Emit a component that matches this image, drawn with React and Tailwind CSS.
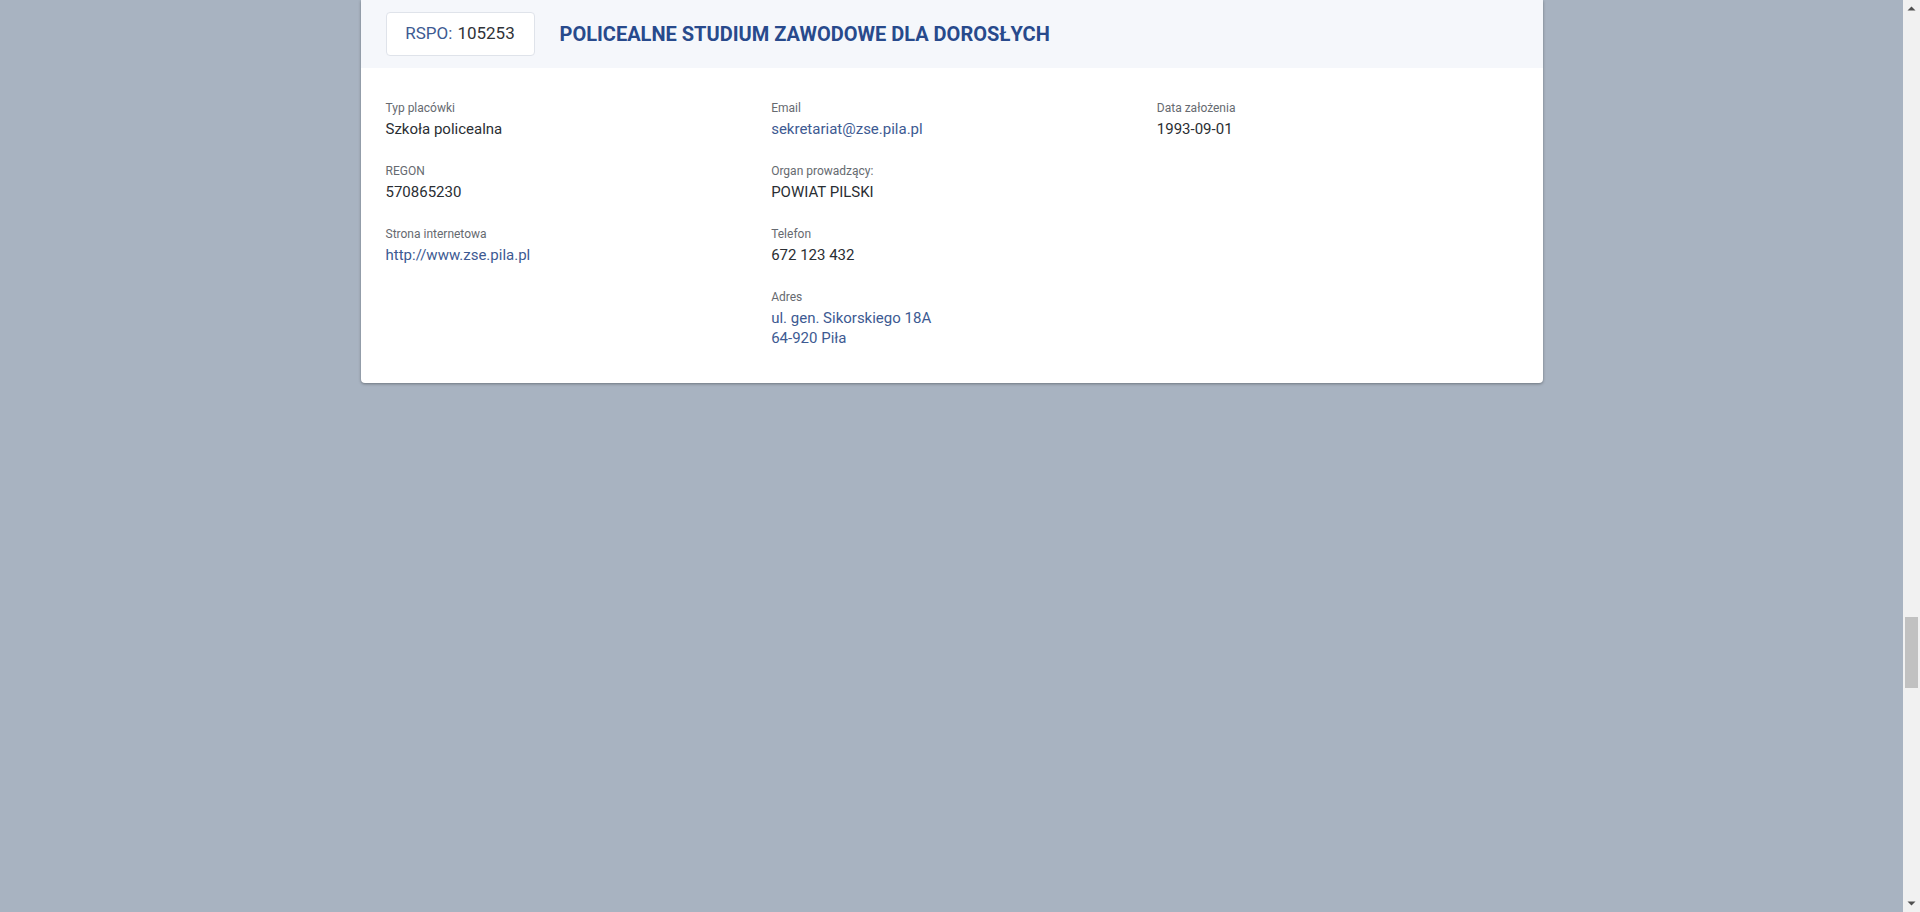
export default function App() {
  const cols = [
    [
      { l: "Typ placówki", v: ["Szkoła policealna"] },
      { l: "REGON", v: ["570865230"] },
      { l: "Strona internetowa", v: ["http://www.zse.pila.pl"], link: true },
    ],
    [
      { l: "Email", v: ["sekretariat@zse.pila.pl"], link: true },
      { l: "Organ prowadzący:", v: ["POWIAT PILSKI"] },
      { l: "Telefon", v: ["672 123 432"] },
      { l: "Adres", v: ["ul. gen. Sikorskiego 18A", "64-920 Piła"], link: true },
    ],
    [{ l: "Data założenia", v: ["1993-09-01"] }],
  ];
  return (
    <div className="flex h-[912px] w-full bg-[#a8b3c1] font-['Roboto',sans-serif] overflow-hidden">
      <div className="flex-1 flex justify-center items-start">
        <div className="w-[1182px] bg-white rounded-b-[4px] shadow-[0_1px_3px_rgba(0,0,0,0.35)]">
          <div className="h-[68px] bg-[#f5f7fb] flex items-center pl-[25px]">
            <div className="h-[44px] w-[149px] border border-[#dfe3ea] rounded-[4px] bg-white flex items-center justify-center text-[17px]">
              <span className="text-[#3d5a92]">RSPO:</span>
              <span className="text-[#2f3338] ml-[5px]">105253</span>
            </div>
            <div className="ml-[25px] text-[20px] font-bold text-[#284a8c]">
              POLICEALNE STUDIUM ZAWODOWE DLA DOROSŁYCH
            </div>
          </div>
          <div className="grid grid-cols-3 pl-[25px] pt-[32px] pb-[35px]">
            {cols.map((c, i) => (
              <div key={i} className="flex flex-col gap-y-[24px]">
                {c.map((it) => (
                  <div key={it.l} className="flex flex-col">
                    <div className="text-[12px] leading-[16px] text-[#666a70]">{it.l}</div>
                    <div
                      className={
                        "mt-[3px] text-[15px] leading-[20px] " +
                        (it.link ? "text-[#3d5a92]" : "text-[#2a2e33]")
                      }
                    >
                      {it.v.map((x) => (
                        <div key={x}>{x}</div>
                      ))}
                    </div>
                  </div>
                ))}
              </div>
            ))}
          </div>
        </div>
      </div>
      <div className="w-[17px] bg-[#f1f1f1] flex flex-col items-center">
        <div className="h-[17px] flex items-center justify-center">
          <svg width="9" height="5" viewBox="0 0 9 5">
            <path d="M0.5 4.5 L4.5 0.5 L8.5 4.5 Z" fill="#505050" />
          </svg>
        </div>
        <div className="flex-1 w-full flex flex-col">
          <div className="h-[600px]" />
          <div className="h-[71px] mx-[2px] bg-[#c1c1c1]" />
          <div className="flex-1" />
        </div>
        <div className="h-[17px] flex items-center justify-center">
          <svg width="9" height="5" viewBox="0 0 9 5">
            <path d="M0.5 0.5 L4.5 4.5 L8.5 0.5 Z" fill="#505050" />
          </svg>
        </div>
      </div>
    </div>
  );
}
